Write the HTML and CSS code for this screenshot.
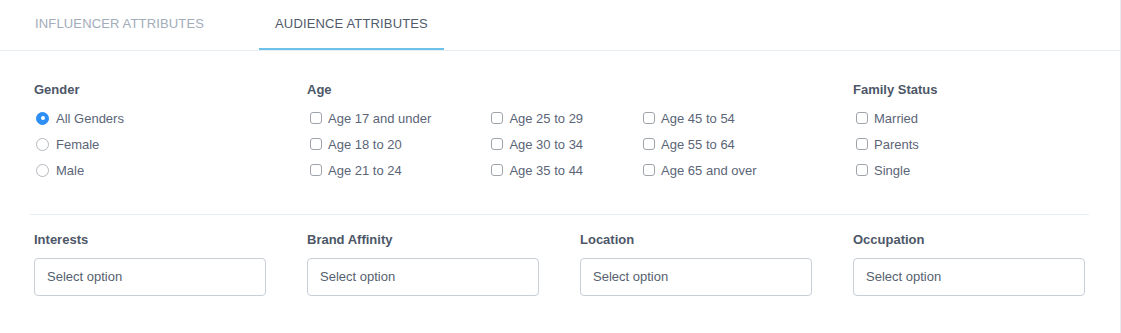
FILE: index.html
```html
<!DOCTYPE html>
<html lang="en">
<head>
  <meta charset="utf-8">
  <title>Audience Attributes</title>
  <link rel="stylesheet" href="styles.css">
</head>
<body>
  <div class="page">
    <nav class="tabs">
      <a class="tab">INFLUENCER ATTRIBUTES</a>
      <a class="tab active">AUDIENCE ATTRIBUTES</a>
    </nav>

    <div class="panel">
      <div class="filter-row options-row">
        <div class="group">
          <h4 class="group-title">Gender</h4>
          <label class="option"><span class="radio checked"></span>All Genders</label>
          <label class="option"><span class="radio"></span>Female</label>
          <label class="option"><span class="radio"></span>Male</label>
        </div>

        <div class="group age-group">
          <h4 class="group-title">Age</h4>
          <div class="age-columns">
            <div class="age-col">
              <label class="option"><span class="checkbox"></span>Age 17 and under</label>
              <label class="option"><span class="checkbox"></span>Age 18 to 20</label>
              <label class="option"><span class="checkbox"></span>Age 21 to 24</label>
            </div>
            <div class="age-col">
              <label class="option"><span class="checkbox"></span>Age 25 to 29</label>
              <label class="option"><span class="checkbox"></span>Age 30 to 34</label>
              <label class="option"><span class="checkbox"></span>Age 35 to 44</label>
            </div>
            <div class="age-col">
              <label class="option"><span class="checkbox"></span>Age 45 to 54</label>
              <label class="option"><span class="checkbox"></span>Age 55 to 64</label>
              <label class="option"><span class="checkbox"></span>Age 65 and over</label>
            </div>
          </div>
        </div>

        <div class="group">
          <h4 class="group-title">Family Status</h4>
          <label class="option"><span class="checkbox"></span>Married</label>
          <label class="option"><span class="checkbox"></span>Parents</label>
          <label class="option"><span class="checkbox"></span>Single</label>
        </div>
      </div>

      <div class="filter-row selects-row">
        <div class="group">
          <h4 class="group-title">Interests</h4>
          <div class="select">Select option</div>
        </div>
        <div class="group">
          <h4 class="group-title">Brand Affinity</h4>
          <div class="select">Select option</div>
        </div>
        <div class="group">
          <h4 class="group-title">Location</h4>
          <div class="select">Select option</div>
        </div>
        <div class="group">
          <h4 class="group-title">Occupation</h4>
          <div class="select">Select option</div>
        </div>
      </div>
    </div>
  </div>
</body>
</html>
```

FILE: styles.css
```css
* {
  margin: 0;
  padding: 0;
  box-sizing: border-box;
}

body {
  font-family: 'Liberation Sans', Arial, sans-serif;
  font-size: 13px;
  background: #fff;
  color: #5b6577;
}

.page {
  width: 1121px;
  height: 333px;
  border-right: 1px solid #e8ecf1;
}

.tabs {
  display: flex;
  gap: 39px;
  padding-left: 19px;
  border-bottom: 1px solid #e6edf3;
}

.tab {
  padding: 0 16px;
  line-height: 48px;
  letter-spacing: 0.15px;
  border-bottom: 2px solid transparent;
  color: #a2acba;
  text-decoration: none;
}

.tab.active {
  color: #505b6c;
  border-bottom-color: #6ec1e9;
}

.panel {
  margin: 0 31px 0 30px;
}

.filter-row {
  display: grid;
  grid-template-columns: repeat(4, 1fr);
  column-gap: 41px;
  padding: 0 4px;
}

.options-row {
  padding-top: 31px;
  padding-bottom: 31px;
  border-bottom: 1px solid #e8edf2;
}

.selects-row {
  padding-top: 17px;
}

.group-title {
  font-size: 13px;
  font-weight: bold;
  line-height: 16px;
  color: #4d5768;
  margin-bottom: 7px;
}

.selects-row .group-title {
  margin-bottom: 10px;
}

.age-group {
  grid-column: span 2;
}

.age-columns {
  display: flex;
  gap: 57px;
}

.option {
  display: flex;
  align-items: center;
  height: 26px;
  white-space: nowrap;
}

.radio {
  width: 13px;
  height: 13px;
  margin: 0 7px 0 2px;
  border: 1px solid #b4b8be;
  border-radius: 50%;
  position: relative;
}

.radio.checked {
  background: #2d8ef4;
  border-color: #2d8ef4;
}

.radio.checked::after {
  content: '';
  position: absolute;
  left: 3.5px;
  top: 3.5px;
  width: 4px;
  height: 4px;
  border-radius: 50%;
  background: #fff;
}

.checkbox {
  width: 12px;
  height: 12px;
  margin: 0 6px 0 3px;
  border: 1px solid #9fa4ab;
  border-radius: 3px;
}

.select {
  height: 38px;
  line-height: 36px;
  padding: 0 12px;
  border: 1px solid #c8cfd8;
  border-radius: 4px;
  color: #565f6f;
}
```
